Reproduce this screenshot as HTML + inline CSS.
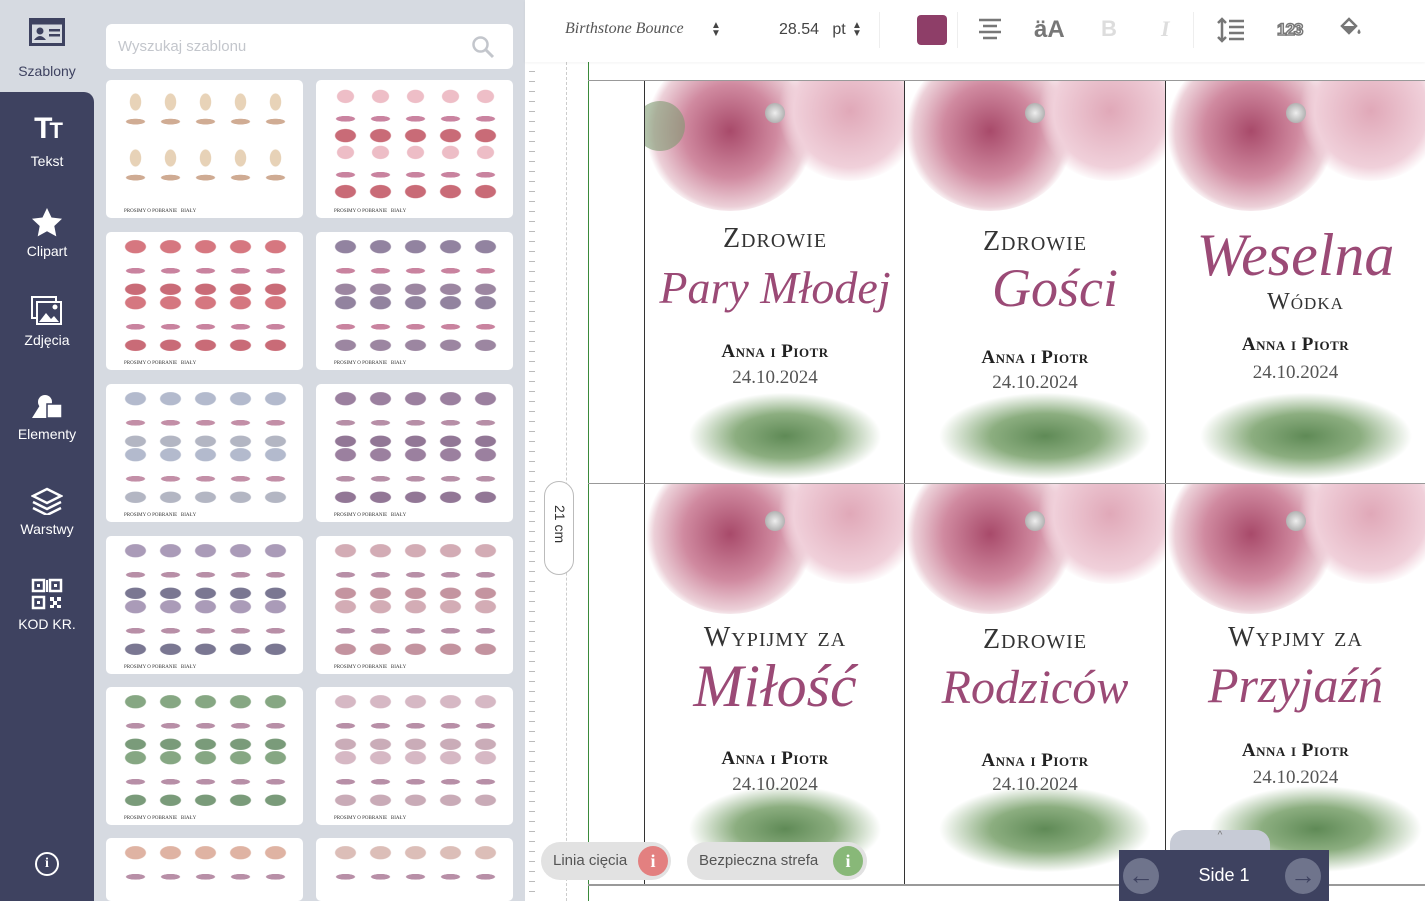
<!DOCTYPE html>
<html style="width:1425px;height:901px;overflow:hidden"><head><meta charset="utf-8"><style>
*{box-sizing:border-box;margin:0;padding:0}
body{width:1425px;height:901px;overflow:hidden;position:relative;background:#d6dae1;font-family:"Liberation Sans",sans-serif}
.sbtop{position:absolute;left:0;top:0;width:94px;height:92px;background:#d6dae1}
.sbdark{position:absolute;left:0;top:92px;width:94px;height:809px;background:#3e4260;border-top-right-radius:10px}
.it{position:absolute;left:0;width:94px;text-align:center;color:#fff;font-size:14px}
.it svg{display:block;margin:0 auto 6px}
.search{position:absolute;left:106px;top:24px;width:407px;height:45px;background:#fff;border-radius:6px;color:#c3c6cc;font-size:15px;padding:14px 12px}
.th{position:absolute;width:197px;height:138px;background:#fff;border-radius:5px;overflow:hidden}
.th .g{position:absolute;left:12px;top:8px;right:12px;height:112px;opacity:.75}
.th .f{position:absolute;left:18px;bottom:4px;font:5px "Liberation Serif",serif;color:#333}
.canvas{position:absolute;left:525px;top:0;width:900px;height:901px;background:#fff}
.tb{position:absolute;left:525px;top:0;width:900px;height:62px;background:#fff;box-shadow:0 1px 3px rgba(0,0,0,.05)}
.card{position:absolute;width:261px;height:402px;overflow:hidden;border-left:1px solid #333}
.fl{position:absolute;border-radius:50%}
.t1{position:absolute;left:0;width:100%;text-align:center;font:300 28px "Liberation Serif",serif;letter-spacing:1px;color:#333;font-variant:small-caps}
.sc{position:absolute;left:0;width:100%;text-align:center;font:italic 50px "Liberation Serif",serif;color:#9b4a76}
.an{position:absolute;left:0;width:100%;text-align:center;font:bold 19px "Liberation Serif",serif;color:#222;font-variant:small-caps;letter-spacing:.5px}
.dt{position:absolute;left:0;width:100%;text-align:center;font:19px "Liberation Serif",serif;color:#555}
.pill{position:absolute;top:842px;height:38px;background:#e2e2e2;border-radius:19px;font-size:15px;color:#555;padding:10px 0 0 12px}
.ic{position:absolute;top:4px;width:30px;height:30px;border-radius:50%;color:#fff;text-align:center;font:bold 18px/30px "Liberation Serif",serif}
</style></head><body>
<div class="sbtop"></div><div class="sbdark"></div>
<div class="it" style="top:18px;color:#3e4260;font-size:14px"><svg width="36" height="28" viewBox="0 0 36 28" style="margin-bottom:17px"><rect x="1.5" y="1.5" width="33" height="25" fill="none" stroke="#3e4260" stroke-width="3"/><rect x="1.5" y="1.5" width="33" height="5" fill="#3e4260"/><circle cx="11" cy="13" r="3.5" fill="#3e4260"/><path d="M5 22q6-8 12 0z" fill="#3e4260"/><rect x="20" y="11" width="11" height="2.5" fill="#3e4260"/><rect x="20" y="16" width="11" height="2.5" fill="#3e4260"/></svg>Szablony</div>
<div class="it" style="top:113px"><div style="font:bold 30px/32px 'Liberation Sans';letter-spacing:-3px;margin-bottom:6px">T<span style="font-size:22px">T</span></div>Tekst</div>
<div class="it" style="top:207px"><svg width="32" height="30" viewBox="0 0 32 30"><path d="M16 1l4.5 9.5 10.5 1.3-7.7 7.2 2 10.4L16 24.3 6.7 29.4l2-10.4L1 11.8l10.5-1.3z" fill="#fff"/></svg>Clipart</div>
<div class="it" style="top:296px"><svg width="32" height="30" viewBox="0 0 32 30"><rect x="1" y="1" width="24" height="21" fill="none" stroke="#fff" stroke-width="2"/><rect x="6" y="6" width="24" height="22" fill="#3e4260" stroke="#fff" stroke-width="2"/><path d="M8 26l7-9 5 6 3-3 5 6z" fill="#fff"/><circle cx="24" cy="11" r="2.5" fill="#fff"/></svg>Zdjęcia</div>
<div class="it" style="top:394px"><svg width="34" height="26" viewBox="0 0 34 26"><circle cx="15" cy="8" r="7" fill="#fff"/><path d="M2 24l10-16 10 16z" fill="#fff"/><rect x="17" y="10" width="15" height="14" fill="#fff" stroke="#3e4260" stroke-width="1.5"/></svg>Elementy</div>
<div class="it" style="top:487px"><svg width="32" height="28" viewBox="0 0 32 28"><path d="M16 2L30 9 16 16 2 9z" fill="none" stroke="#fff" stroke-width="2.5"/><path d="M2 15l14 7 14-7M2 21l14 7 14-7" fill="none" stroke="#fff" stroke-width="2.5"/></svg>Warstwy</div>
<div class="it" style="top:578px"><svg width="32" height="32" viewBox="0 0 32 32"><rect x="2" y="2" width="11" height="11" fill="none" stroke="#fff" stroke-width="2.5"/><rect x="19" y="2" width="11" height="11" fill="none" stroke="#fff" stroke-width="2.5"/><rect x="2" y="19" width="11" height="11" fill="none" stroke="#fff" stroke-width="2.5"/><rect x="6" y="6" width="3" height="3" fill="#fff"/><rect x="23" y="6" width="3" height="3" fill="#fff"/><rect x="6" y="23" width="3" height="3" fill="#fff"/><path d="M19 19h4v4h-4zM26 19h4v4h-4zM22 23h4v4h-4zM19 27h4v3h-4zM26 27h4v3h-4zM15 2h2v12h-2z" fill="#fff"/></svg>KOD KR.</div>
<div style="position:absolute;left:35px;top:852px;width:24px;height:24px;border:2px solid #fff;border-radius:50%;color:#fff;text-align:center;font:bold 14px/20px 'Liberation Serif'">i</div>

<div class="search">Wyszukaj szablonu<svg style="position:absolute;right:18px;top:11px" width="24" height="24" viewBox="0 0 24 24"><circle cx="9.5" cy="9.5" r="7" fill="none" stroke="#c3c6cc" stroke-width="2.5"/><path d="M15 15l7 7" stroke="#c3c6cc" stroke-width="3"/></svg></div>

<div class="th" style="left:106px;top:80px"><div class="g" style="background:radial-gradient(ellipse 6px 9px at 50% 25%,#e0c4a0 90%,transparent) 0 0/35px 56px,radial-gradient(ellipse 10px 3px at 50% 60%,#c09070 90%,transparent) 0 0/35px 56px"></div><div class="f">PROSIMY O POBRANIE &nbsp; BIAŁY</div></div>
<div class="th" style="left:316px;top:80px"><div class="g" style="background:radial-gradient(ellipse 9px 7px at 50% 15%,#e8a8b4 90%,transparent) 0 0/35px 56px,radial-gradient(ellipse 11px 7px at 50% 85%,#b83a4a 90%,transparent) 0 0/35px 56px,radial-gradient(ellipse 10px 3px at 50% 55%,#b85a80 90%,transparent) 0 0/35px 56px"></div><div class="f">PROSIMY O POBRANIE &nbsp; BIAŁY</div></div>
<div class="th" style="left:106px;top:232px"><div class="g" style="background:radial-gradient(ellipse 11px 7px at 50% 12%,#c84a56 90%,transparent) 0 0/35px 56px,radial-gradient(ellipse 11px 6px at 50% 88%,#b83a4a 90%,transparent) 0 0/35px 56px,radial-gradient(ellipse 10px 3px at 50% 55%,#b85a80 90%,transparent) 0 0/35px 56px"></div><div class="f">PROSIMY O POBRANIE &nbsp; BIAŁY</div></div>
<div class="th" style="left:316px;top:232px"><div class="g" style="background:radial-gradient(ellipse 11px 7px at 50% 12%,#6e5a80 90%,transparent) 0 0/35px 56px,radial-gradient(ellipse 11px 6px at 50% 88%,#7b5e82 90%,transparent) 0 0/35px 56px,radial-gradient(ellipse 10px 3px at 50% 55%,#b85a80 90%,transparent) 0 0/35px 56px"></div><div class="f">PROSIMY O POBRANIE &nbsp; BIAŁY</div></div>
<div class="th" style="left:106px;top:384px"><div class="g" style="background:radial-gradient(ellipse 11px 7px at 50% 12%,#9aa4bd 90%,transparent) 0 0/35px 56px,radial-gradient(ellipse 11px 6px at 50% 88%,#9a9eb0 90%,transparent) 0 0/35px 56px,radial-gradient(ellipse 10px 3px at 50% 55%,#b06a8a 90%,transparent) 0 0/35px 56px"></div><div class="f">PROSIMY O POBRANIE &nbsp; BIAŁY</div></div>
<div class="th" style="left:316px;top:384px"><div class="g" style="background:radial-gradient(ellipse 11px 7px at 50% 12%,#7a5680 90%,transparent) 0 0/35px 56px,radial-gradient(ellipse 11px 6px at 50% 88%,#6e4a74 90%,transparent) 0 0/35px 56px,radial-gradient(ellipse 10px 3px at 50% 55%,#a06a8a 90%,transparent) 0 0/35px 56px"></div><div class="f">PROSIMY O POBRANIE &nbsp; BIAŁY</div></div>
<div class="th" style="left:106px;top:536px"><div class="g" style="background:radial-gradient(ellipse 11px 7px at 50% 12%,#8e7aa0 90%,transparent) 0 0/35px 56px,radial-gradient(ellipse 11px 6px at 50% 88%,#4e4a6e 90%,transparent) 0 0/35px 56px,radial-gradient(ellipse 10px 3px at 50% 55%,#a06a8a 90%,transparent) 0 0/35px 56px"></div><div class="f">PROSIMY O POBRANIE &nbsp; BIAŁY</div></div>
<div class="th" style="left:316px;top:536px"><div class="g" style="background:radial-gradient(ellipse 11px 7px at 50% 12%,#c4909c 90%,transparent) 0 0/35px 56px,radial-gradient(ellipse 11px 6px at 50% 88%,#b07080 90%,transparent) 0 0/35px 56px,radial-gradient(ellipse 10px 3px at 50% 55%,#a06a8a 90%,transparent) 0 0/35px 56px"></div><div class="f">PROSIMY O POBRANIE &nbsp; BIAŁY</div></div>
<div class="th" style="left:106px;top:687px"><div class="g" style="background:radial-gradient(ellipse 11px 7px at 50% 12%,#5e8a5a 90%,transparent) 0 0/35px 56px,radial-gradient(ellipse 11px 6px at 50% 88%,#4e7a4e 90%,transparent) 0 0/35px 56px,radial-gradient(ellipse 10px 3px at 50% 55%,#a06a8a 90%,transparent) 0 0/35px 56px"></div><div class="f">PROSIMY O POBRANIE &nbsp; BIAŁY</div></div>
<div class="th" style="left:316px;top:687px"><div class="g" style="background:radial-gradient(ellipse 11px 7px at 50% 12%,#c8a0b0 90%,transparent) 0 0/35px 56px,radial-gradient(ellipse 11px 6px at 50% 88%,#b890a0 90%,transparent) 0 0/35px 56px,radial-gradient(ellipse 10px 3px at 50% 55%,#a06a8a 90%,transparent) 0 0/35px 56px"></div><div class="f">PROSIMY O POBRANIE &nbsp; BIAŁY</div></div>
<div class="th" style="left:106px;top:838px;height:63px"><div class="g" style="background:radial-gradient(ellipse 11px 7px at 50% 12%,#d49a84 90%,transparent) 0 0/35px 56px,radial-gradient(ellipse 10px 3px at 50% 55%,#a06a8a 90%,transparent) 0 0/35px 56px"></div></div>
<div class="th" style="left:316px;top:838px;height:63px"><div class="g" style="background:radial-gradient(ellipse 11px 7px at 50% 12%,#d0a8a0 90%,transparent) 0 0/35px 56px,radial-gradient(ellipse 10px 3px at 50% 55%,#a06a8a 90%,transparent) 0 0/35px 56px"></div></div>

<div class="canvas"></div>
<div style="position:absolute;left:525px;top:62px;width:14px;height:839px;background:repeating-linear-gradient(#fff 0 9px,#bbb 9px 10px);background-size:6px 10px;background-repeat:repeat-y;background-position:4px 0"></div>
<div style="position:absolute;left:566px;top:62px;height:839px;border-left:1px dashed #ccc"></div>
<div style="position:absolute;left:588px;top:62px;height:839px;border-left:1px solid #3a8a3a"></div>
<div style="position:absolute;left:544px;top:481px;width:30px;height:94px;border:1px solid #bbb;border-radius:15px;background:#fff"><div style="position:absolute;left:0;top:30px;width:30px;transform:rotate(90deg);font-size:14px;color:#333;white-space:nowrap;text-align:center">21 cm</div></div>
<div style="position:absolute;left:588px;top:80px;width:837px;border-top:1px solid #999"></div>
<div style="position:absolute;left:588px;top:483px;width:837px;border-top:1px solid #999"></div>
<div style="position:absolute;left:588px;top:884px;width:837px;border-top:2px solid #999"></div>

<div class="card" style="left:644px;top:81px"><div class="fl" style="left:0px;top:-30px;width:170px;height:160px;background:radial-gradient(circle,#a84a6a 0,#d08aa0 40%,#ecd0d8 65%,transparent 72%)"></div><div class="fl" style="left:130px;top:-40px;width:150px;height:140px;background:radial-gradient(circle,#e0a8b8 0,#f0d0da 55%,transparent 70%)"></div><div class="fl" style="left:-10px;top:20px;width:50px;height:50px;background:#7e9a72;opacity:.6"></div><div class="fl" style="left:120px;top:22px;width:20px;height:20px;background:radial-gradient(circle,#eee,#999)"></div><div class="fl" style="left:40px;top:310px;width:200px;height:90px;background:radial-gradient(ellipse,#5f8a56 0,#8cae80 35%,transparent 68%)"></div>
<div class="t1" style="top:142px">Zdrowie</div><div class="sc" style="top:180px;font-size:46px">Pary Młodej</div><div class="an" style="top:260px">Anna i Piotr</div><div class="dt" style="top:286px">24.10.2024</div></div>
<div class="card" style="left:904px;top:81px"><div class="fl" style="left:0px;top:-30px;width:170px;height:160px;background:radial-gradient(circle,#a84a6a 0,#d08aa0 40%,#ecd0d8 65%,transparent 72%)"></div><div class="fl" style="left:130px;top:-40px;width:150px;height:140px;background:radial-gradient(circle,#e0a8b8 0,#f0d0da 55%,transparent 70%)"></div><div class="fl" style="left:120px;top:22px;width:20px;height:20px;background:radial-gradient(circle,#eee,#999)"></div><div class="fl" style="left:30px;top:310px;width:220px;height:90px;background:radial-gradient(ellipse,#5f8a56 0,#8cae80 35%,transparent 68%)"></div>
<div class="t1" style="top:145px">Zdrowie</div><div class="sc" style="top:176px;font-size:54px;padding-left:40px">Gości</div><div class="an" style="top:266px">Anna i Piotr</div><div class="dt" style="top:291px">24.10.2024</div></div>
<div class="card" style="left:1165px;top:81px;width:260px"><div class="fl" style="left:0px;top:-30px;width:170px;height:160px;background:radial-gradient(circle,#a84a6a 0,#d08aa0 40%,#ecd0d8 65%,transparent 72%)"></div><div class="fl" style="left:130px;top:-40px;width:150px;height:140px;background:radial-gradient(circle,#e0a8b8 0,#f0d0da 55%,transparent 70%)"></div><div class="fl" style="left:120px;top:22px;width:20px;height:20px;background:radial-gradient(circle,#eee,#999)"></div><div class="fl" style="left:30px;top:310px;width:220px;height:90px;background:radial-gradient(ellipse,#5f8a56 0,#8cae80 35%,transparent 68%)"></div>
<div class="sc" style="top:140px;font-size:60px">Weselna</div><div class="t1" style="top:208px;font-size:24px;padding-left:20px">Wódka</div><div class="an" style="top:253px">Anna i Piotr</div><div class="dt" style="top:281px">24.10.2024</div></div>

<div class="card" style="left:644px;top:484px;height:400px"><div class="fl" style="left:0px;top:-30px;width:170px;height:160px;background:radial-gradient(circle,#a84a6a 0,#d08aa0 40%,#ecd0d8 65%,transparent 72%)"></div><div class="fl" style="left:130px;top:-40px;width:150px;height:140px;background:radial-gradient(circle,#e0a8b8 0,#f0d0da 55%,transparent 70%)"></div><div class="fl" style="left:120px;top:27px;width:20px;height:20px;background:radial-gradient(circle,#eee,#999)"></div><div class="fl" style="left:40px;top:300px;width:200px;height:90px;background:radial-gradient(ellipse,#5f8a56 0,#8cae80 35%,transparent 68%)"></div>
<div class="t1" style="top:138px">Wypijmy za</div><div class="sc" style="top:168px;font-size:60px">Miłość</div><div class="an" style="top:264px">Anna i Piotr</div><div class="dt" style="top:290px">24.10.2024</div></div>
<div class="card" style="left:904px;top:484px;height:400px"><div class="fl" style="left:0px;top:-30px;width:170px;height:160px;background:radial-gradient(circle,#a84a6a 0,#d08aa0 40%,#ecd0d8 65%,transparent 72%)"></div><div class="fl" style="left:130px;top:-40px;width:150px;height:140px;background:radial-gradient(circle,#e0a8b8 0,#f0d0da 55%,transparent 70%)"></div><div class="fl" style="left:120px;top:27px;width:20px;height:20px;background:radial-gradient(circle,#eee,#999)"></div><div class="fl" style="left:30px;top:300px;width:220px;height:90px;background:radial-gradient(ellipse,#5f8a56 0,#8cae80 35%,transparent 68%)"></div>
<div class="t1" style="top:140px">Zdrowie</div><div class="sc" style="top:176px;font-size:48px">Rodziców</div><div class="an" style="top:266px">Anna i Piotr</div><div class="dt" style="top:290px">24.10.2024</div></div>
<div class="card" style="left:1165px;top:484px;width:260px;height:400px"><div class="fl" style="left:0px;top:-30px;width:170px;height:160px;background:radial-gradient(circle,#a84a6a 0,#d08aa0 40%,#ecd0d8 65%,transparent 72%)"></div><div class="fl" style="left:130px;top:-40px;width:150px;height:140px;background:radial-gradient(circle,#e0a8b8 0,#f0d0da 55%,transparent 70%)"></div><div class="fl" style="left:120px;top:27px;width:20px;height:20px;background:radial-gradient(circle,#eee,#999)"></div><div class="fl" style="left:40px;top:300px;width:220px;height:90px;background:radial-gradient(ellipse,#5f8a56 0,#8cae80 35%,transparent 68%)"></div>
<div class="t1" style="top:138px">Wypjmy za</div><div class="sc" style="top:172px;font-size:50px">Przyjaźń</div><div class="an" style="top:256px">Anna i Piotr</div><div class="dt" style="top:283px">24.10.2024</div></div>

<div class="tb">
<div style="position:absolute;left:40px;top:20px;font:italic 16px 'Liberation Serif',serif;color:#555">Birthstone Bounce</div>
<div style="position:absolute;left:186px;top:22px;font-size:10px;line-height:8px;color:#444">▲<br>▼</div>
<div style="position:absolute;left:254px;top:21px;font-size:16px;color:#444">28.54 &nbsp; pt</div>
<div style="position:absolute;left:327px;top:22px;font-size:10px;line-height:8px;color:#444">▲<br>▼</div>
<div style="position:absolute;left:354px;top:12px;height:36px;border-left:1px solid #eee"></div>
<div style="position:absolute;left:392px;top:15px;width:30px;height:30px;background:#8e3e68;border-radius:4px"></div>
<div style="position:absolute;left:432px;top:12px;height:36px;border-left:1px solid #eee"></div>
<svg style="position:absolute;left:453px;top:18px" width="24" height="24" viewBox="0 0 24 24"><path d="M1 2h22M5 8h14M1 14h22M5 20h14" stroke="#777" stroke-width="2.5"/></svg>
<div style="position:absolute;left:509px;top:16px;font:bold 24px 'Liberation Sans';color:#777">äA</div>
<div style="position:absolute;left:576px;top:16px;font:bold 22px 'Liberation Sans';color:#ddd">B</div>
<div style="position:absolute;left:636px;top:16px;font:italic bold 22px 'Liberation Serif';color:#ddd">I</div>
<div style="position:absolute;left:668px;top:12px;height:36px;border-left:1px solid #eee"></div>
<svg style="position:absolute;left:692px;top:17px" width="28" height="26" viewBox="0 0 28 26"><path d="M5 2v22M1 6l4-4 4 4M1 20l4 4 4-4M12 4h15M12 10h15M12 16h15M12 22h15" stroke="#777" stroke-width="2.5" fill="none"/></svg>
<div style="position:absolute;left:752px;top:20px;font:bold 17px 'Liberation Sans';color:#fff;-webkit-text-stroke:1.5px #777;letter-spacing:-1px">123</div>
<svg style="position:absolute;left:814px;top:16px" width="24" height="24" viewBox="0 0 24 24"><path d="M3 10l7-7 7 7-7 7z" fill="none" stroke="#777" stroke-width="2.5"/><path d="M3 10h14l-7 7z" fill="#777"/><path d="M20 13q-3 4 0 5q3-1 0-5z" fill="#777"/></svg>
</div>

<div class="pill" style="left:541px;width:130px">Linia cięcia<div class="ic" style="left:97px;background:#e38080">i</div></div>
<div class="pill" style="left:687px;width:180px">Bezpieczna strefa<div class="ic" style="left:146px;background:#88b878">i</div></div>
<div style="position:absolute;left:1170px;top:830px;width:100px;height:24px;background:#c7cbd6;border-radius:14px 14px 0 0;text-align:center;font-size:10px;color:#777">^</div>
<div style="position:absolute;left:1119px;top:850px;width:210px;height:51px;background:#3e4260">
<div style="position:absolute;left:4px;top:8px;width:36px;height:36px;border-radius:50%;background:#6f748c;color:#3e4260;font-size:26px;text-align:center;line-height:34px">←</div>
<div style="position:absolute;left:0;width:210px;top:15px;text-align:center;color:#fff;font-size:18px">Side 1</div>
<div style="position:absolute;left:166px;top:8px;width:36px;height:36px;border-radius:50%;background:#6f748c;color:#3e4260;font-size:26px;text-align:center;line-height:34px">→</div>
</div>
</body></html>
